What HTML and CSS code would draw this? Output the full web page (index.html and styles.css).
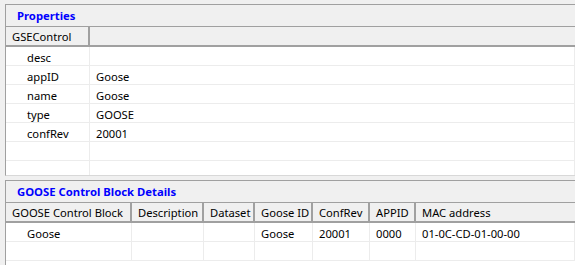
FILE: index.html
```html
<!DOCTYPE html>
<html>
<head>
<meta charset="utf-8">
<link rel="stylesheet" href="styles.css">
</head>
<body>
<div class="page">
  <section class="panel panel-props">
    <div class="panel-title">Properties</div>
    <div class="grid props">
      <div class="row head">
        <div class="hcell">GSEControl</div>
        <div class="hcell"></div>
      </div>
      <div class="row"><div class="cell indent">desc</div><div class="cell"></div></div>
      <div class="row"><div class="cell indent">appID</div><div class="cell">Goose</div></div>
      <div class="row"><div class="cell indent">name</div><div class="cell">Goose</div></div>
      <div class="row"><div class="cell indent">type</div><div class="cell">GOOSE</div></div>
      <div class="row"><div class="cell indent">confRev</div><div class="cell">20001</div></div>
      <div class="row"><div class="cell"></div><div class="cell"></div></div>
      <div class="row"><div class="cell"></div><div class="cell"></div></div>
    </div>
  </section>
  <section class="panel panel-details">
    <div class="panel-title">GOOSE Control Block Details</div>
    <div class="grid details">
      <div class="row head">
        <div class="hcell">GOOSE Control Block</div>
        <div class="hcell">Description</div>
        <div class="hcell">Dataset</div>
        <div class="hcell">Goose ID</div>
        <div class="hcell">ConfRev</div>
        <div class="hcell">APPID</div>
        <div class="hcell">MAC address</div>
      </div>
      <div class="row">
        <div class="cell indent">Goose</div>
        <div class="cell"></div>
        <div class="cell"></div>
        <div class="cell">Goose</div>
        <div class="cell">20001</div>
        <div class="cell">0000</div>
        <div class="cell">01-0C-CD-01-00-00</div>
      </div>
      <div class="row">
        <div class="cell"></div><div class="cell"></div><div class="cell"></div><div class="cell"></div><div class="cell"></div><div class="cell"></div><div class="cell"></div>
      </div>
    </div>
  </section>
</div>
</body>
</html>
```

FILE: styles.css
```css
html, body {
  margin: 0;
  padding: 0;
  background: #f0f0f0;
  width: 575px;
  height: 265px;
  overflow: hidden;
  font-family: "Noto Sans", "Open Sans", sans-serif;
  font-size: 11.2px;
  color: #000;
}

.page {
  display: flex;
  flex-direction: column;
  gap: 4px;
  padding: 4px 0 0 5px;
}

.panel {
  border-top: 1px solid #a0a0a0;
  border-left: 1px solid #a0a0a0;
  background: #fff;
  display: flex;
  flex-direction: column;
  overflow: hidden;
}

.panel-props {
  height: 172px;
  box-sizing: border-box;
  border-bottom: 1px solid #d8d8d8;
}

.panel-details {
  height: 85px;
  box-sizing: border-box;
}

.panel-title {
  height: 22px;
  box-sizing: border-box;
  background: #f0f0f0;
  color: #0000ff;
  font-weight: bold;
  font-size: 11.3px;
  padding-left: 11px;
  line-height: 21px;
  border-bottom: 1px solid #a0a0a0;
}

.row {
  display: grid;
  height: 19px;
  box-sizing: border-box;
  border-bottom: 1px solid #ececec;
}

.props .row {
  grid-template-columns: 84px 1fr;
}

.details .row {
  grid-template-columns: 126px 72px 51px 58px 57px 46px 1fr;
}

.row.head {
  height: 20px;
  background: #f0f0f0;
  border-bottom: 2px solid #a0a0a0;
}

.hcell {
  border-right: 2px solid #a0a0a0;
  padding-left: 6px;
  line-height: 19.5px;
  white-space: nowrap;
}

.hcell:last-child {
  border-right: none;
}

.cell {
  border-right: 1px solid #ececec;
  padding-left: 6px;
  line-height: 21px;
  height: 18px;
  white-space: nowrap;
}

.cell.indent {
  padding-left: 21px;
}
```
